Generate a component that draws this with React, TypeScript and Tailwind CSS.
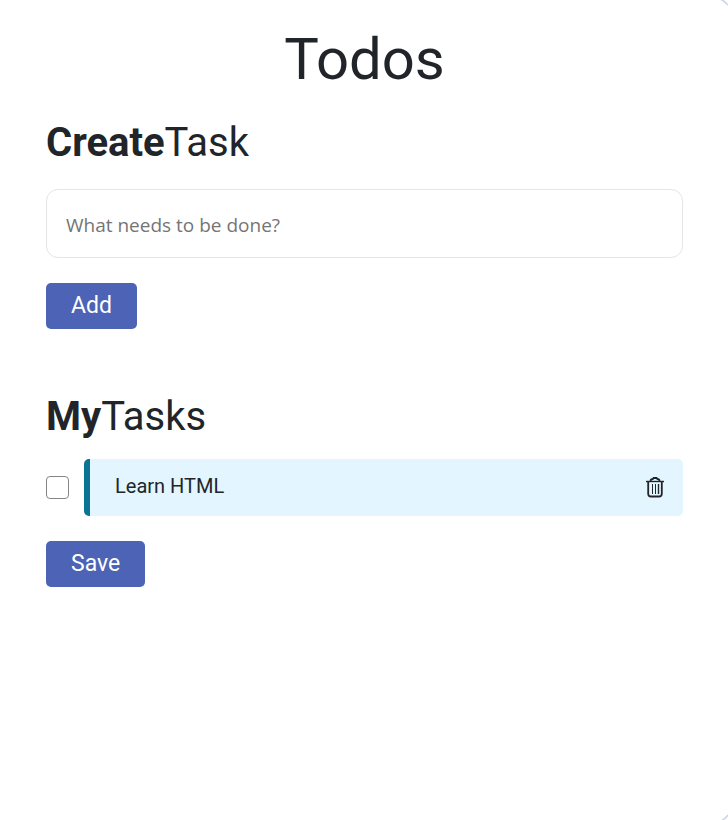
import { useState } from "react";

const buttonClass =
  "block h-[46px] cursor-pointer rounded-[5px] bg-[#4c63b6] px-[25px] text-[23px] leading-[46px] text-white";

function TrashIcon() {
  return (
    <svg
      width="20"
      height="24"
      viewBox="0 0 20 24"
      fill="none"
      stroke="#212529"
      strokeWidth="2"
      aria-hidden="true"
    >
      <path d="M1 6.5h18" strokeWidth="1.4" />
      <path d="M5.5 6C5.7 4.6 6.4 4 7.8 4L8.6 3h3l.8 1c1.4 0 2 .6 2.2 2" strokeWidth="1.8" />
      <path d="M3.2 6.5v12.2c0 1.7 1 2.8 2.8 2.8h8c1.8 0 2.8-1.1 2.8-2.8V6.5" strokeWidth="1.8" />
      <path d="M7.5 9v10M10.5 9v10" strokeWidth="1" />
      <path d="M13.5 9v10" strokeWidth="1.4" />
    </svg>
  );
}

function Heading({ strong, rest }: { strong: string; rest: string }) {
  return (
    <h2 className="text-[40px] leading-[50px]">
      <span className="font-bold">{strong}</span>
      {rest}
    </h2>
  );
}

export default function App() {
  const [draft, setDraft] = useState("");
  const [tasks, setTasks] = useState([{ name: "Learn HTML", done: false }]);

  const add = () => {
    if (!draft.trim()) return;
    setTasks([...tasks, { name: draft.trim(), done: false }]);
    setDraft("");
  };

  return (
    <main className="relative min-h-screen overflow-hidden bg-white pt-6 pr-[45px] pl-[46px] font-[Roboto,sans-serif] text-[#212529]">
      <svg className="absolute top-0 right-0" width="8" height="6" fill="none" stroke="#cdd3e4" aria-hidden="true">
        <path d="M0 -1Q4.5 1 8 5" strokeWidth="1.5" />
      </svg>
      <svg className="absolute right-0 bottom-0" width="8" height="6" fill="none" stroke="#cdd3e4" aria-hidden="true">
        <path d="M1 7Q5 5 8 1" strokeWidth="1.5" />
      </svg>

      <h1 className="text-center text-[58px] leading-[70px]">Todos</h1>

      <form
        className="mt-6"
        onSubmit={(e) => {
          e.preventDefault();
          add();
        }}
      >
        <Heading strong="Create" rest="Task" />
        <input
          type="text"
          aria-label="New task"
          placeholder="What needs to be done?"
          value={draft}
          onChange={(e) => setDraft(e.target.value)}
          className="mt-[21px] block h-[69px] w-full rounded-xl border border-[#e4e5e9] px-[19px] pt-0.5 font-['Open_Sans',sans-serif] text-[19px] outline-none placeholder:text-[#757575]"
        />
        <button type="submit" className={`mt-[25px] ${buttonClass}`}>
          Add
        </button>
      </form>

      <section className="mt-[63px]">
        <Heading strong="My" rest="Tasks" />
        <ul className="mt-[17px] flex flex-col gap-3">
          {tasks.map((task, i) => (
            <li key={i} className="flex items-center gap-[15px]">
              <input
                id={`task-${i}`}
                type="checkbox"
                checked={task.done}
                onChange={() =>
                  setTasks(tasks.map((t, j) => (j === i ? { ...t, done: !t.done } : t)))
                }
                className="size-[23px] shrink-0 appearance-none rounded-[4px] border border-[#858585] bg-white checked:bg-[#4c63b6]"
              />
              <div className="flex h-[57px] grow items-center justify-between rounded-[5px] border-l-6 border-[#0b7494] bg-[#e3f5fe] pr-[18px] pl-[25px]">
                <label htmlFor={`task-${i}`} className="pb-1 text-[20px] leading-6">
                  {task.name}
                </label>
                <button
                  type="button"
                  aria-label={`Delete ${task.name}`}
                  onClick={() => setTasks(tasks.filter((_, j) => j !== i))}
                  className="cursor-pointer pb-0.5"
                >
                  <TrashIcon />
                </button>
              </div>
            </li>
          ))}
        </ul>
        <button type="button" className={`mt-[25px] ${buttonClass}`}>
          Save
        </button>
      </section>
    </main>
  );
}
